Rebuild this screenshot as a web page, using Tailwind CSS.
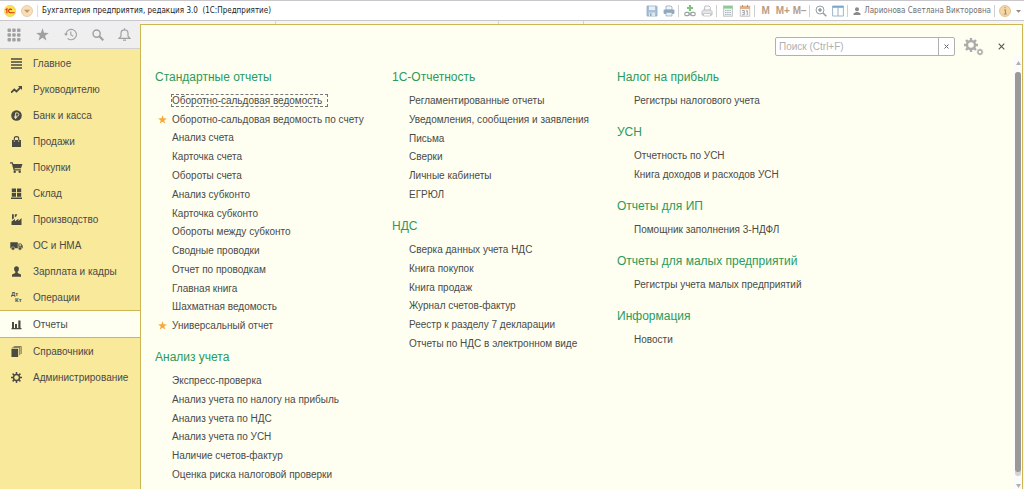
<!DOCTYPE html>
<html lang="ru">
<head>
<meta charset="utf-8">
<meta name="viewport" content="width=device-width, initial-scale=1">
<title>Бухгалтерия предприятия, редакция 3.0</title>
<script src="https://cdn.jsdelivr.net/npm/@tailwindcss/browser@4"></script>
</head>
<body class="flex min-h-screen flex-col bg-[#f5f5f5] font-['Liberation_Sans',Arial,sans-serif] text-[10px] text-[#4a4a4a]">

<!-- Window title bar -->
<header class="flex h-[21px] shrink-0 items-center border-t border-b border-[#c9c7cb] bg-white">
  <button type="button" aria-label="1С" class="ml-1 flex w-3">
    <svg class="size-3" viewBox="0 0 12 12"><circle cx="6" cy="6" r="5.7" fill="#fbe04f" stroke="#e8c83c" stroke-width=".5"/><path d="M1.600 4.900 2.900 3.900v4.300M7.900 4.900a1.800 1.800 0 1 0-1.400 2.800H10.600" fill="none" stroke="#dc2a1c" stroke-width="1.100"/></svg>
  </button>
  <button type="button" aria-label="Главное меню" class="ml-[5px] flex w-3">
    <svg class="size-3" viewBox="0 0 12 12"><circle cx="6" cy="6" r="5.500" fill="#f9dfb8" stroke="#e0bf94" stroke-width=".7"/><path d="M3 4.800h6L6 8z" fill="#b99a78"/></svg>
  </button>
  <span class="mx-1 h-3 w-px bg-[#dcdcdc]"></span>
  <h1 class="whitespace-pre font-['DejaVu_Sans_Condensed','DejaVu_Sans',sans-serif] text-[8px] text-[#222222]">Бухгалтерия предприятия, редакция 3.0  (1С:Предприятие)</h1>

  <div class="ml-auto flex h-full items-center">
    <button type="button" aria-label="Сохранить" class="flex w-[17px] justify-center"><svg class="size-3" viewBox="0 0 12 12"><path d="M1 1h9.500L11 1.500V11H1z" fill="#a9c0d6" stroke="#8da9c2" stroke-width=".8"/><path d="M3 1.400h6v3.600H3z" fill="#e8f0f7"/><path d="M3 7.500h6V11H3z" fill="#dbe6ef"/><path d="M4 8.200h1.500V11H4z" fill="#8da9c2"/></svg></button>
    <button type="button" aria-label="Печать" class="flex w-[17px] justify-center"><svg class="size-3" viewBox="0 0 12 12"><path d="M3 1h5l1 1v3H3z" fill="#f4f7fa" stroke="#93a9bd" stroke-width=".8"/><rect x=".6" y="4.600" width="10.800" height="4.400" rx="1" fill="#8fa9c0"/><path d="M3 7.500h6V11H3z" fill="#e9f0f5" stroke="#93a9bd" stroke-width=".7"/></svg></button>
    <span class="mr-[2px] ml-px h-3 w-px bg-[#cfcfcf]"></span>
    <button type="button" aria-label="Получить ссылку" class="flex w-[17px] justify-center"><svg class="size-3" viewBox="0 0 12 12"><path d="M6 0v6M3 3h6" stroke="#7cc47e" stroke-width="2.200"/><rect x=".8" y="7.300" width="4.600" height="3.400" rx="1.500" fill="none" stroke="#9aa6a0" stroke-width="1.200"/><rect x="6.600" y="7.300" width="4.600" height="3.400" rx="1.500" fill="none" stroke="#9aa6a0" stroke-width="1.200"/><path d="M4 9h4" stroke="#9aa6a0"/></svg></button>
    <button type="button" aria-label="Предварительный просмотр" class="flex w-[17px] justify-center"><svg class="size-3" viewBox="0 0 12 12"><path d="M3 5.500 4 1h4l1.500 1.500-.5 3" fill="#fafafa" stroke="#b5b8bd" stroke-width=".9"/><path d="M1 6.500 2.500 5h7L11 6.500V10H1z" fill="#e4e6e9" stroke="#b5b8bd" stroke-width=".9"/><path d="M2.500 8.500h7V11h-7z" fill="#fff" stroke="#b5b8bd" stroke-width=".7"/></svg></button>
    <span class="mr-[2px] ml-px h-3 w-px bg-[#cfcfcf]"></span>
    <button type="button" aria-label="Калькулятор" class="flex w-[17px] justify-center"><svg class="size-3" viewBox="0 0 12 12"><rect x="1.500" y=".9" width="9" height="10.300" fill="#f1f3f1" stroke="#b8c0b8" stroke-width=".8"/><path d="M1.500 1h9v2.600h-9z" fill="#8ccb97"/><path d="M3 5.500h6.500M3 7.500h6.500M3 9.500h6.500" stroke="#aab5c0" stroke-width="1" stroke-dasharray="1.500 .7"/></svg></button>
    <button type="button" aria-label="Календарь" class="flex w-[17px] justify-center"><svg class="size-3" viewBox="0 0 12 12"><rect x="1.200" y="1.200" width="9.600" height="10" fill="#f6f6f6" stroke="#bdb9b5" stroke-width=".8"/><path d="M1 1h10v3H1z" fill="#e2b28c"/><path d="M3.500 0v2M8.500 0v2" stroke="#a88f7b"/><path d="M3 5.500h2.300v4.300H3M3.500 7.600h1.800M7 6.300 8.300 5.500v4.600" fill="none" stroke="#9a9fa8" stroke-width=".9"/></svg></button>
    <span class="mr-[2px] ml-px h-3 w-px bg-[#cfcfcf]"></span>
    <button type="button" class="w-[17px] text-center font-bold text-[#b89d86]">M</button>
    <button type="button" class="w-[17px] text-center font-bold text-[#b89d86]">M+</button>
    <button type="button" class="w-[17px] text-center font-bold text-[#b89d86]">M−</button>
    <span class="mr-[2px] ml-px h-3 w-px bg-[#cfcfcf]"></span>
    <button type="button" aria-label="Масштаб" class="flex w-[17px] justify-center"><svg class="size-3" viewBox="0 0 12 12" fill="none"><circle cx="5" cy="5" r="4" stroke="#979da3" stroke-width="1"/><path d="M8 8l3.300 3.300" stroke="#979da3" stroke-width="1.600"/><path d="M5 3v4M3 5h4" stroke="#6f7880" stroke-width="1"/></svg></button>
    <button type="button" aria-label="Панели" class="flex w-[17px] justify-center"><svg class="size-3" viewBox="0 0 12 12"><path d="M.6 1h10.800v10H.6z" fill="#fff" stroke="#93b0c9" stroke-width=".9"/><path d="M.6 1h10.800v1.800H.6z" fill="#7ba5cb"/><path d="M6 2v9" stroke="#93b0c9"/></svg></button>
    <span class="mr-[2px] ml-px h-3 w-px bg-[#cfcfcf]"></span>
    <a href="#" class="flex items-center font-['DejaVu_Sans_Condensed','DejaVu_Sans',sans-serif] text-[8px] whitespace-nowrap text-[#707070]">
      <svg class="mr-[3px] ml-[3px] size-2" viewBox="0 0 8 8" fill="#8b8b8b"><circle cx="4" cy="2.200" r="2"/><path d="M.5 8V6.500L3 5h2l2.500 1.500V8z"/></svg>Ларионова Светлана Викторовна</a>
    <span class="mr-[2px] ml-[3px] h-3 w-px bg-[#cfcfcf]"></span>
    <button type="button" aria-label="Справка" class="flex w-4 justify-center"><svg class="size-3" viewBox="0 0 12 12"><circle cx="6" cy="6" r="5.500" fill="#f6d7a4" stroke="#d9b98a" stroke-width=".8"/><path d="M5 5h1.500v4M4.800 9h3M5.500 2.800h1.200" fill="none" stroke="#a08c74" stroke-width="1.100"/></svg></button>
    <button type="button" aria-label="Ещё" class="flex w-[11px] justify-center"><svg class="size-[7px]" viewBox="0 0 7 7"><path d="M1 3h5L3.500 5.800z" fill="#8a8a8a"/></svg></button>
  </div>
</header>

<div class="flex flex-1">
  <!-- Sections sidebar -->
  <aside class="flex w-[140px] shrink-0 flex-col bg-[#f9e99b]">
    <div class="flex h-7 items-center border-b border-[#d0cfd0] bg-[#efefef] text-[#a0a0a0]">
      <button type="button" aria-label="Меню функций" class="flex w-7 justify-center"><svg class="size-[14px]" viewBox="0 0 14 14" fill="currentColor"><rect x=".5" y=".5" width="3.500" height="3.500" rx="1"/><rect x="5.200" y=".5" width="3.500" height="3.500" rx="1"/><rect x="10" y=".5" width="3.500" height="3.500" rx="1"/><rect x=".5" y="5.200" width="3.500" height="3.500" rx="1"/><rect x="5.200" y="5.200" width="3.500" height="3.500" rx="1"/><rect x="10" y="5.200" width="3.500" height="3.500" rx="1"/><rect x=".5" y="10" width="3.500" height="3.500" rx="1"/><rect x="5.200" y="10" width="3.500" height="3.500" rx="1"/><rect x="10" y="10" width="3.500" height="3.500" rx="1"/></svg></button>
      <button type="button" aria-label="Избранное" class="flex w-7 justify-center"><svg class="size-[13px]" viewBox="0 0 13 13" fill="currentColor"><path d="M6.500.3 8.100 4.800l4.700.1-3.700 2.900 1.300 4.600-3.900-2.700-3.900 2.700 1.300-4.600L.2 4.900l4.700-.1z"/></svg></button>
      <button type="button" aria-label="История" class="flex w-7 justify-center"><svg class="size-[13px]" viewBox="0 0 13 13" fill="none" stroke="currentColor" stroke-width="1.100"><path d="M2 6.500A5.200 5.200 0 1 1 3.600 10.300"/><path d="M6.800 3.500v3.300l2.400 1.400"/><path d="M0 5.500h4L2 8z" fill="currentColor" stroke="none"/></svg></button>
      <button type="button" aria-label="Поиск" class="flex w-7 justify-center"><svg class="size-[12px]" viewBox="0 0 12 12" fill="none" stroke="currentColor"><circle cx="4.600" cy="4.600" r="3.600" stroke-width="1.400"/><path d="M7.300 7.300l4 4" stroke-width="2.200"/></svg></button>
      <button type="button" aria-label="Уведомления" class="flex w-6 justify-center"><svg class="size-[13px]" viewBox="0 0 13 13" fill="none" stroke="currentColor" stroke-width="1.200"><path d="M1.200 10.300h10.600L10 8V5.300C10 3 8.600 1.800 6.500 1.800S3 3 3 5.300V8zM6.500.2v1.600M5 12.200h3"/></svg></button>
    </div>
    <nav class="pt-px">
      <a href="#" class="flex h-[26px] items-center"><svg class="mr-[11px] ml-[11px] size-[11px]" viewBox="0 0 11 11"><path d="M0 1h11M0 4h11M0 7h11M0 10h11" stroke="#4a4a42" stroke-width="1.300"/></svg>Главное</a>
      <a href="#" class="flex h-[26px] items-center"><svg class="mr-[11px] ml-[11px] size-[11px]" viewBox="0 0 11 11"><path d="M0 8.700 3.300 5.500 5.500 7.500 9.500 3.300" fill="none" stroke="#4a4a42" stroke-width="1.800"/><path d="M7 2h4v4z" fill="#4a4a42"/></svg>Руководителю</a>
      <a href="#" class="flex h-[26px] items-center"><svg class="mr-[11px] ml-[11px] size-[11px]" viewBox="0 0 11 11"><circle cx="5.500" cy="5.500" r="5.300" fill="#4a4a42"/><path d="M4.600 9V2.900h1.600a1.600 1.600 0 0 1 0 3.300H3.200M3.200 7.600h3" fill="none" stroke="#f9e99b" stroke-width=".9"/></svg>Банк и касса</a>
      <a href="#" class="flex h-[26px] items-center"><svg class="mr-[11px] ml-[11px] size-[11px]" viewBox="0 0 11 11"><path d="M1 4h9v7H1z" fill="#4a4a42"/><path d="M3.300 6V2.500C3.300 1 4.200.6 5.500.6s2.200.4 2.200 1.900V6" fill="none" stroke="#4a4a42" stroke-width="1.100"/><path d="M3.300 4.300V6M7.700 4.300V6" stroke="#f9e99b" stroke-width=".7"/></svg>Продажи</a>
      <a href="#" class="flex h-[26px] items-center"><svg class="mr-[10px] ml-[10px] h-[11px] w-[13px]" viewBox="0 0 13 11"><path d="M0 .3h2.700L3.300 2H12.500L11 6.300H4.500l.3.900h6v1.300H3.700L1.800 1.500H0z" fill="#4a4a42"/><circle cx="4.700" cy="9.800" r="1.200" fill="#4a4a42"/><circle cx="9.700" cy="9.800" r="1.200" fill="#4a4a42"/></svg>Покупки</a>
      <a href="#" class="flex h-[26px] items-center"><svg class="mr-[11px] ml-[11px] size-[11px]" viewBox="0 0 11 11" fill="#4a4a42"><path d="M.8.500H5v3.700H.8zM6 .5h4.200v3.700H6zM.8 5H5v3.700H.8zM6 5h4.200v3.700H6zM0 9.500h11V11H0z"/></svg>Склад</a>
      <a href="#" class="flex h-[26px] items-center"><svg class="mr-[11px] ml-[11px] size-[11px]" viewBox="0 0 11 11" fill="#4a4a42"><path d="M.5 11V7.500L4 5v2.300L7.500 4.800V7L10.500 4v7zM1 .3h1.800V4.500L1 5.500zM3.800.3h2.500L5.200 2.500l-1.400.8z"/></svg>Производство</a>
      <a href="#" class="flex h-[26px] items-center"><svg class="mr-[10px] ml-[10px] h-[11px] w-[13px]" viewBox="0 0 13 11" fill="#4a4a42"><path d="M.3 2.200h7.500v6H.3zM8.400 3.500h2.600l1.700 2.300v2.400H8.400z"/><path d="M9.300 4.300h1.300l.9 1.400H9.300z" fill="#f9e99b"/><circle cx="3" cy="8.500" r="1.700" stroke="#f9e99b" stroke-width=".5"/><circle cx="10" cy="8.500" r="1.700" stroke="#f9e99b" stroke-width=".5"/></svg>ОС и НМА</a>
      <a href="#" class="flex h-[26px] items-center"><svg class="mr-[11px] ml-[11px] size-[11px]" viewBox="0 0 11 11" fill="#4a4a42"><ellipse cx="5.500" cy="3" rx="2.400" ry="2.800"/><path d="M1 10.800V8.500L4.300 7V5h2.400v2L10 8.500v2.300z"/></svg>Зарплата и кадры</a>
      <a href="#" class="flex h-[26px] items-center"><svg class="mr-[10px] ml-[11px] h-[14px] w-3" viewBox="0 0 12 14" aria-hidden="true" fill="#4a4a42" font-family="Liberation Sans, sans-serif" font-size="6" font-weight="bold"><text x="0" y="6">Дт</text><text x="4" y="12">Кт</text></svg>Операции</a>
      <a href="#" aria-current="page" class="flex h-7 items-center border-y border-[#cdb754] bg-[#fefff0]"><svg class="mr-[11px] ml-[11px] size-[11px]" viewBox="0 0 11 11" fill="#4a4a42"><path d="M1 3h2v6H1zM4 5h2v4H4zM7.300 1.500h2.200V9H7.300zM.5 9h10v1.200H.5z"/></svg>Отчеты</a>
      <a href="#" class="flex h-[26px] items-center"><svg class="mr-[11px] ml-[11px] size-[11px]" viewBox="0 0 11 12" fill="#4a4a42"><path d="M0 3h7.300v9H0z"/><path d="M1 2 2 1.500h7V10M2.600.6 3 .4h7.600v8.300" fill="none" stroke="#4a4a42" stroke-width=".8"/></svg>Справочники</a>
      <a href="#" class="flex h-[26px] items-center"><svg class="mr-[11px] ml-[11px] size-[11px]" viewBox="0 0 11 11" fill="none" stroke="#4a4a42"><circle cx="5.500" cy="5.500" r="3" stroke-width="1.500"/><path d="M5.500 0v2M5.500 9v2M0 5.500h2M9 5.500h2M1.600 1.600 3 3M8 8l1.400 1.400M1.600 9.400 3 8M8 3l1.400-1.400" stroke-width="1.500"/></svg>Администрирование</a>
    </nav>
  </aside>

  <div class="flex min-w-0 flex-1 flex-col pr-px">
    <!-- Open-window tab strip -->
    <div class="flex h-[3px] shrink-0">
      <span class="w-[136px] border-r border-[#d4d4d4]"></span>
      <span class="w-[223px] border-r border-[#d4d4d4]"></span>
      <span class="w-[85px] border-r border-[#d4d4d4]"></span>
    </div>

    <!-- Reports panel -->
    <main class="flex flex-1 flex-col border-t border-r border-l border-[#cdb754] bg-[#fefff0]">
      <div class="flex items-center justify-end pt-3 pr-[15px]">
        <form class="flex h-[19px] w-[180px] rounded-xs border border-[#b0b0b0] bg-white">
          <input type="text" aria-label="Поиск" placeholder="Поиск (Ctrl+F)" class="min-w-0 flex-1 px-[3px] text-[10px] outline-none placeholder:text-[#b0b0b0]">
          <button type="reset" aria-label="Очистить" class="flex w-4 items-center justify-center border-l border-[#b0b0b0]"><svg class="size-[5px]" viewBox="0 0 5 5"><path d="M.5.500l4 4M4.500.500l-4 4" stroke="#666" stroke-width="1"/></svg></button>
        </form>
        <button type="button" aria-label="Настройка" class="ml-[9px] flex"><svg class="h-[18px] w-5" viewBox="0 0 20 18" fill="none" stroke="#acacac"><circle cx="7" cy="7" r="4" stroke-width="2.400"/><path d="M7 0v2.500M7 11.500V14M0 7h2.500M11.500 7H14M2 2l1.900 1.900M10.100 10.100 12 12M2 12l1.900-1.900M10.100 3.900 12 2" stroke-width="2.400"/><circle cx="16" cy="14" r="2" stroke-width="1.300"/><path d="M16 10.700V12M16 16v1.300M12.700 14H14M18 14h1.300M13.700 11.700l.9.900M17.400 15.400l.9.900M13.700 16.300l.9-.9M17.400 12.600l.9-.9" stroke-width="1.200"/></svg></button>
        <button type="button" aria-label="Закрыть" class="ml-[11px] flex size-3 items-center justify-center"><svg class="size-[7px]" viewBox="0 0 7 7"><path d="M.7.700l5.600 5.600M6.300.700.700 6.300" stroke="#555" stroke-width="1.100"/></svg></button>
      </div>

      <div class="flex flex-1">
        <div class="flex min-w-0 flex-1 pt-[11px] pl-[14px] leading-[19px] whitespace-nowrap">
          <div class="flex w-[237px] shrink-0 flex-col gap-3">
            <section>
              <h2 class="mb-1 text-[12px] leading-5 text-[#2a9a60]">Стандартные отчеты</h2>
              <ul class="grid h-[244px] auto-rows-fr items-center">
                <li class="flex items-center pl-[17px]"><a href="#" class="pr-[5px] leading-[11px] outline-1 outline-[#777777] outline-dashed">Оборотно-сальдовая ведомость</a></li>
                <li class="flex items-center pl-[3px]"><svg class="mr-[5px] size-[9px]" viewBox="0 0 13 13" fill="#f7a93b"><path d="M6.500.3 8.100 4.800l4.700.1-3.700 2.900 1.300 4.600-3.900-2.700-3.900 2.700 1.300-4.600L.2 4.900l4.700-.1z"/></svg><a href="#">Оборотно-сальдовая ведомость по счету</a></li>
                <li class="pl-[17px]"><a href="#">Анализ счета</a></li>
                <li class="pl-[17px]"><a href="#">Карточка счета</a></li>
                <li class="pl-[17px]"><a href="#">Обороты счета</a></li>
                <li class="pl-[17px]"><a href="#">Анализ субконто</a></li>
                <li class="pl-[17px]"><a href="#">Карточка субконто</a></li>
                <li class="pl-[17px]"><a href="#">Обороты между субконто</a></li>
                <li class="pl-[17px]"><a href="#">Сводные проводки</a></li>
                <li class="pl-[17px]"><a href="#">Отчет по проводкам</a></li>
                <li class="pl-[17px]"><a href="#">Главная книга</a></li>
                <li class="pl-[17px]"><a href="#">Шахматная ведомость</a></li>
                <li class="flex items-center pl-[3px]"><svg class="mr-[5px] size-[9px]" viewBox="0 0 13 13" fill="#f7a93b"><path d="M6.500.3 8.100 4.800l4.700.1-3.700 2.900 1.300 4.600-3.900-2.700-3.900 2.700 1.300-4.600L.2 4.900l4.700-.1z"/></svg><a href="#">Универсальный отчет</a></li>
              </ul>
            </section>
            <section>
              <h2 class="mb-1 text-[12px] leading-5 text-[#2a9a60]">Анализ учета</h2>
              <ul class="grid h-[113px] auto-rows-fr items-center">
                <li class="pl-[17px]"><a href="#">Экспресс-проверка</a></li>
                <li class="pl-[17px]"><a href="#">Анализ учета по налогу на прибыль</a></li>
                <li class="pl-[17px]"><a href="#">Анализ учета по НДС</a></li>
                <li class="pl-[17px]"><a href="#">Анализ учета по УСН</a></li>
                <li class="pl-[17px]"><a href="#">Наличие счетов-фактур</a></li>
                <li class="pl-[17px]"><a href="#">Оценка риска налоговой проверки</a></li>
              </ul>
            </section>
          </div>

          <div class="flex w-[225px] shrink-0 flex-col gap-3">
            <section>
              <h2 class="mb-1 text-[12px] leading-5 text-[#2a9a60]">1С-Отчетность</h2>
              <ul class="grid h-[113px] auto-rows-fr items-center">
                <li class="pl-[17px]"><a href="#">Регламентированные отчеты</a></li>
                <li class="pl-[17px]"><a href="#">Уведомления, сообщения и заявления</a></li>
                <li class="pl-[17px]"><a href="#">Письма</a></li>
                <li class="pl-[17px]"><a href="#">Сверки</a></li>
                <li class="pl-[17px]"><a href="#">Личные кабинеты</a></li>
                <li class="pl-[17px]"><a href="#">ЕГРЮЛ</a></li>
              </ul>
            </section>
            <section>
              <h2 class="mb-1 text-[12px] leading-5 text-[#2a9a60]">НДС</h2>
              <ul class="grid h-[113px] auto-rows-fr items-center">
                <li class="pl-[17px]"><a href="#">Сверка данных учета НДС</a></li>
                <li class="pl-[17px]"><a href="#">Книга покупок</a></li>
                <li class="pl-[17px]"><a href="#">Книга продаж</a></li>
                <li class="pl-[17px]"><a href="#">Журнал счетов-фактур</a></li>
                <li class="pl-[17px]"><a href="#">Реестр к разделу 7 декларации</a></li>
                <li class="pl-[17px]"><a href="#">Отчеты по НДС в электронном виде</a></li>
              </ul>
            </section>
          </div>

          <div class="flex min-w-0 flex-1 flex-col gap-3">
            <section>
              <h2 class="mb-1 text-[12px] leading-5 text-[#2a9a60]">Налог на прибыль</h2>
              <ul><li class="pl-[17px]"><a href="#">Регистры налогового учета</a></li></ul>
            </section>
            <section>
              <h2 class="mb-1 text-[12px] leading-5 text-[#2a9a60]">УСН</h2>
              <ul>
                <li class="pl-[17px]"><a href="#">Отчетность по УСН</a></li>
                <li class="pl-[17px]"><a href="#">Книга доходов и расходов УСН</a></li>
              </ul>
            </section>
            <section>
              <h2 class="mb-1 text-[12px] leading-5 text-[#2a9a60]">Отчеты для ИП</h2>
              <ul><li class="pl-[17px]"><a href="#">Помощник заполнения 3-НДФЛ</a></li></ul>
            </section>
            <section>
              <h2 class="mb-1 text-[12px] leading-5 text-[#2a9a60]">Отчеты для малых предприятий</h2>
              <ul><li class="pl-[17px]"><a href="#">Регистры учета малых предприятий</a></li></ul>
            </section>
            <section>
              <h2 class="mb-1 text-[12px] leading-5 text-[#2a9a60]">Информация</h2>
              <ul><li class="pl-[17px]"><a href="#">Новости</a></li></ul>
            </section>
          </div>
        </div>

        <!-- Scroll bar -->
        <div class="flex w-2 flex-col items-center bg-[#fbfbfb]" aria-hidden="true">
          <svg class="mt-[5px] h-1 w-[5px]" viewBox="0 0 5 4"><path d="M0 4h5L2.500 0z" fill="#b0b0b0"/></svg>
          <div class="mt-[7px] mb-2 flex w-[6px] flex-1 rounded-full bg-[#d4d4d4] pb-1"><div class="flex-1 rounded-full bg-[#999999]"></div></div>
          <svg class="mb-px h-1 w-[5px]" viewBox="0 0 5 4"><path d="M0 0h5L2.500 4z" fill="#b0b0b0"/></svg>
        </div>
      </div>
    </main>
  </div>
</div>
</body>
</html>
